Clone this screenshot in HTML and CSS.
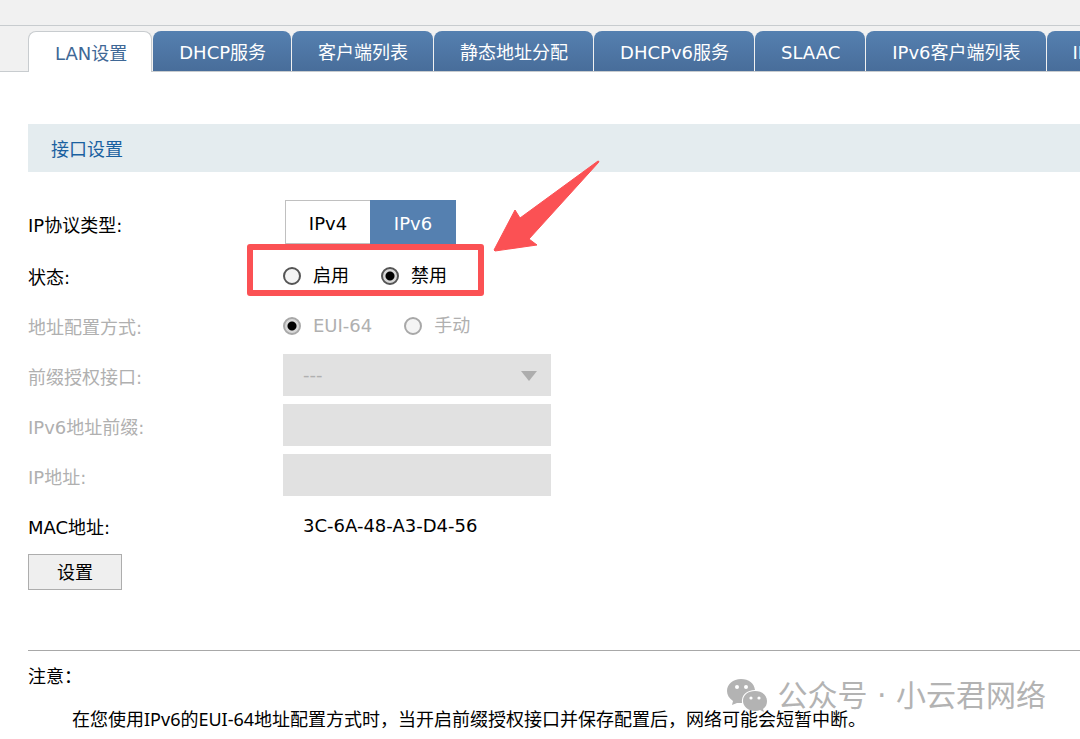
FILE: index.html
```
<!DOCTYPE html>
<html lang="zh-CN">
<head>
    <meta charset="UTF-8">
    <meta name="viewport" content="width=device-width, initial-scale=1.0">
    <title>LAN设置</title>
    <link rel="stylesheet" href="styles.css">
</head>
<body>
    <header class="top-bar"></header>

    <nav class="tabs">
        <a class="tab active" href="#lan">LAN设置</a>
        <a class="tab" href="#dhcp">DHCP服务</a>
        <a class="tab" href="#clients">客户端列表</a>
        <a class="tab" href="#static">静态地址分配</a>
        <a class="tab" href="#dhcpv6">DHCPv6服务</a>
        <a class="tab" href="#slaac">SLAAC</a>
        <a class="tab" href="#clients6">IPv6客户端列表</a>
        <a class="tab" href="#ipv6">IPv6</a>
    </nav>

    <main class="content">
        <h2 class="section-title">接口设置</h2>

        <form class="lan-form">
            <div class="row">
                <span class="row-label">IP协议类型:</span>
                <div class="switch">
                    <button type="button" class="switch-btn">IPv4</button>
                    <button type="button" class="switch-btn selected">IPv6</button>
                </div>
            </div>

            <div class="row status-row">
                <span class="row-label">状态:</span>
                <div class="radios">
                    <label class="radio"><input type="radio" name="status">启用</label>
                    <label class="radio"><input type="radio" name="status" checked>禁用</label>
                </div>
                <div class="mark-box"></div>
                <svg class="mark-arrow" width="108" height="92" viewBox="0 0 108 92">
                    <path d="M1 90 L22 50 L27 58 L105 1 Q107 1 105 3 L36 79 L44 85 L2 91 Z" fill="#fb5154" stroke="#fb5154" stroke-width="1" stroke-linejoin="round"/>
                </svg>
            </div>

            <div class="row disabled">
                <span class="row-label">地址配置方式:</span>
                <div class="radios">
                    <label class="radio"><input type="radio" name="mode" checked disabled>EUI-64</label>
                    <label class="radio"><input type="radio" name="mode" disabled>手动</label>
                </div>
            </div>

            <div class="row disabled">
                <label class="row-label" for="prefixIf">前缀授权接口:</label>
                <div class="select-wrap">
                    <select class="field" id="prefixIf" disabled>
                        <option>---</option>
                    </select>
                </div>
            </div>

            <div class="row disabled">
                <label class="row-label" for="prefix">IPv6地址前缀:</label>
                <input class="field" type="text" id="prefix" disabled>
            </div>

            <div class="row disabled">
                <label class="row-label" for="ip">IP地址:</label>
                <input class="field" type="text" id="ip" disabled>
            </div>

            <div class="row">
                <span class="row-label">MAC地址:</span>
                <span class="mac">3C-6A-48-A3-D4-56</span>
            </div>

            <button type="button" class="submit">设置</button>
        </form>

        <section class="notes">
            <h3>注意：</h3>
            <p>在您使用IPv6的EUI-64地址配置方式时，当开启前缀授权接口并保存配置后，网络可能会短暂中断。</p>
            <div class="watermark">
                <svg width="40" height="36" viewBox="0 0 40 36">
                    <path fill="#b3b3b3" d="M14 1 C6 1 0 6 0 13 C0 17 2 20 6 23 L5 27 L10 25 L15 25 C14 17 20 12 28 12 C27 5 22 1 14 1 Z"/>
                    <path fill="#b3b3b3" d="M28 13 C21 13 16 17 16 23 C16 29 22 33 28 33 Q31 33 33 32 L37 34 L36 31 C39 29 40 26 40 23 C40 17 35 13 28 13 Z"/>
                    <g fill="#fff">
                        <circle cx="10" cy="9" r="2"/>
                        <circle cx="19" cy="9" r="2"/>
                        <circle cx="24" cy="20" r="1.6"/>
                        <circle cx="32" cy="20" r="1.6"/>
                    </g>
                </svg>
                <span>公众号 · 小云君网络</span>
            </div>
        </section>
    </main>
</body>
</html>
```
FILE: styles.css
```
:root {
    --bar-bg: #f1f1f1;
    --line: #c8cccf;
    --blue: #5580b0;
    --blue-dark: #486d9a;
    --title-bg: #e4ecef;
    --title-text: #1a61a0;
    --disabled-bg: #e1e1e1;
    --disabled-text: #b0b0b0;
    --mark: #fb5154;
}

* {
    box-sizing: border-box;
}

body {
    margin: 0;
    overflow-x: hidden;
    background-color: #fff;
    color: #000;
    font-family: "DejaVu Sans", "Noto Sans CJK SC", sans-serif;
    font-size: 18px;
    line-height: 24px;
}

button,
input,
select {
    font: inherit;
}

.top-bar {
    height: 26px;
    background-color: var(--bar-bg);
    border-bottom: 1px solid var(--line);
}

.tabs {
    display: flex;
    gap: 1px;
    height: 46px;
    padding: 5px 0 0 28px;
    overflow: hidden;
    background-color: var(--bar-bg);
    box-shadow: inset 0 -1px var(--line);
}

.tab {
    flex: none;
    height: 40px;
    padding: 0 25px 0 26px;
    border-radius: 8px 8px 0 0;
    background: linear-gradient(var(--blue), var(--blue-dark));
    color: #fff;
    line-height: 43px;
    text-decoration: none;
}

.tab.active {
    height: 41px;
    padding-right: 24px;
    border: 1px solid var(--line);
    border-bottom: none;
    background: #fff;
    color: #3f6896;
}

.content {
    padding: 52px 0 8px 28px;
}

.section-title {
    margin: 0 0 28px;
    padding: 14px 23px 10px;
    background-color: var(--title-bg);
    color: var(--title-text);
    font-size: 18px;
    font-weight: normal;
}

.lan-form {
    display: flex;
    flex-direction: column;
    gap: 8px;
}

.row {
    display: flex;
    align-items: center;
    min-height: 42px;
}

.row-label {
    width: 255px;
    padding-top: 6px;
}

.disabled {
    color: var(--disabled-text);
}

.switch {
    display: flex;
    margin: 0 0 2px 2px;
}

.switch-btn {
    width: 86px;
    height: 44px;
    padding: 4px 0 0;
    border: 1px solid #c0c0c0;
    background-color: #fff;
    color: #000;
}

.switch-btn.selected {
    margin-left: -1px;
    border-color: var(--blue);
    background-color: var(--blue);
    color: #fff;
}

.radios {
    display: flex;
    gap: 32px;
    padding-top: 2px;
}

.radio {
    display: flex;
    align-items: center;
    gap: 12px;
}

.radio input {
    appearance: none;
    width: 18px;
    height: 18px;
    margin: 0;
    border: 2px solid #555;
    border-radius: 50%;
    background-color: #f4f4f4;
}

.radio input:checked {
    background: radial-gradient(circle, #000 4px, #d8d8d8 5px);
}

.radio input:disabled {
    border-color: #a8a8a8;
}

.status-row {
    position: relative;
}

.mark-box {
    position: absolute;
    top: -10px;
    left: 219px;
    width: 237px;
    height: 52px;
    border: 6px solid var(--mark);
    border-radius: 3px;
    pointer-events: none;
}

.mark-arrow {
    position: absolute;
    top: -94px;
    left: 465px;
}

.field {
    display: block;
    width: 268px;
    height: 42px;
    padding: 0 20px;
    border: none;
    border-radius: 0;
    background-color: var(--disabled-bg);
    color: var(--disabled-text);
}

select.field {
    appearance: none;
    opacity: 1;
}

.select-wrap {
    position: relative;
}

.select-wrap::after {
    content: "";
    position: absolute;
    top: 17px;
    right: 14px;
    border: 8px solid transparent;
    border-top: 10px solid #adadad;
    border-bottom: none;
}

.mac {
    padding: 2px 0 0 20px;
}

.submit {
    width: 94px;
    height: 36px;
    padding: 2px 0 0;
    border: 1px solid #adadad;
    background-color: #efefef;
    color: #000;
}

.notes {
    position: relative;
    margin-top: 60px;
    padding-top: 14px;
    border-top: 1px solid #a8a8a8;
}

.notes h3 {
    margin: 0 0 18px;
    font-size: 18px;
    font-weight: normal;
}

.notes p {
    position: relative;
    z-index: 1;
    margin: 0 0 0 44px;
    font-family: "Noto Sans", "Noto Sans CJK SC", sans-serif;
}

.watermark {
    position: absolute;
    top: 27px;
    right: 34px;
    display: flex;
    align-items: center;
    gap: 10px;
    color: #b3b3b3;
    font-size: 30px;
    line-height: 36px;
    white-space: nowrap;
}
```
